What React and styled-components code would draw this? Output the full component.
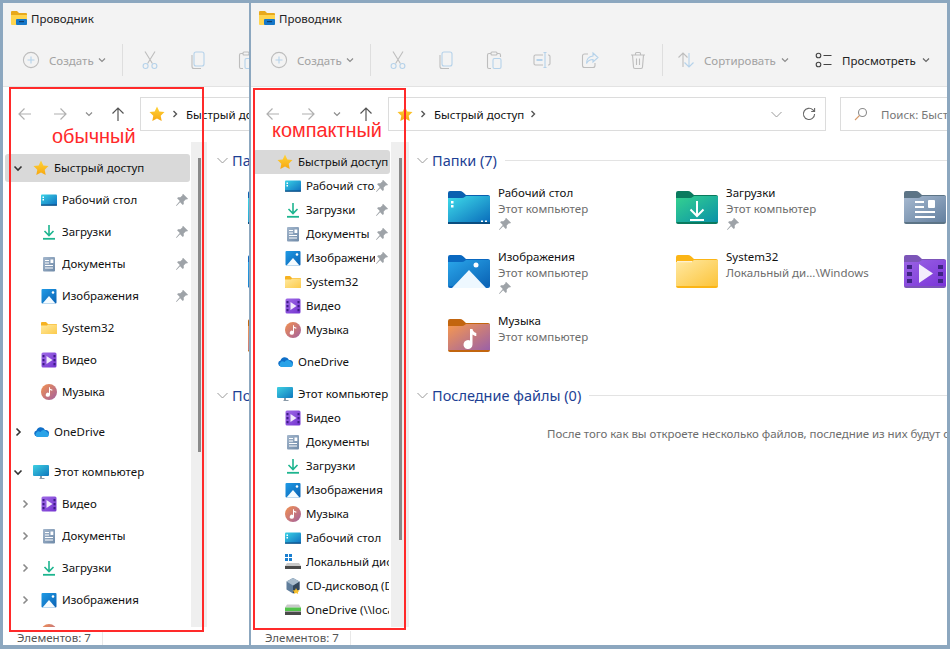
import React, { useId } from 'react'
import styled, { createGlobalStyle } from 'styled-components'

const GlobalStyle = createGlobalStyle`
  html, body { margin: 0; padding: 0; background: #8ca7bf; }
  body { font-family: "Noto Sans", "Open Sans", sans-serif; font-size: 11.5px; color: #111; }
`

const Page = styled.div`
  position: relative;
  display: flex;
  gap: 2px;
  width: 950px;
  height: 649px;
  box-sizing: border-box;
  padding: 3px 3px 4px;
  overflow: hidden;
  background: #8ca7bf;
`

const Window = styled.div`
  display: flex;
  flex-direction: column;
  flex: none;
  width: ${p => p.$width}px;
  overflow: hidden;
  background: #fff;
`

const TitleBar = styled.div`
  display: flex;
  align-items: center;
  gap: 4px;
  flex: none;
  height: 30px;
  padding-left: 8px;
  background: #f3f3f3;
  color: #222;
`

const Toolbar = styled.div`
  display: flex;
  align-items: center;
  flex: none;
  height: 54px;
  width: 696px;
  padding-top: 1px;
  box-sizing: border-box;
  background: #f3f3f3;
  border-bottom: 1px solid #e3e3e3;
  color: #a2a2a2;
`

const Labeled = styled.div`
  display: flex;
  align-items: center;
  flex: none;
  width: ${p => p.$width}px;
  padding-left: ${p => p.$pad}px;
  box-sizing: border-box;
  color: ${p => (p.$dark ? '#222' : '#a2a2a2')};
  white-space: nowrap;
  svg:first-child { margin-right: 8px; flex: none; }
`

const Caret = styled.svg`
  flex: none;
  width: 8px;
  height: 6px;
  margin-left: ${p => p.$gap}px;
  fill: none;
  stroke: #8c8c8c;
  stroke-width: 1.2;
`

const ToolButton = styled.div`
  display: flex;
  align-items: center;
  justify-content: center;
  flex: none;
  width: 48px;
`

const ToolSep = styled.div`
  flex: none;
  width: 1px;
  height: 32px;
  margin-right: ${p => p.$gap}px;
  background: #dedede;
`

const AddressRow = styled.div`
  display: flex;
  align-items: flex-start;
  flex: none;
  width: 696px;
  height: 55px;
  padding: 10px 0 0 4px;
  box-sizing: border-box;
`

const NavButton = styled.div`
  display: flex;
  align-items: center;
  justify-content: center;
  flex: none;
  width: ${p => p.$width}px;
  height: 34px;
`

const AddressBox = styled.div`
  display: flex;
  align-items: center;
  flex: none;
  width: 438px;
  height: 34px;
  margin-left: 5px;
  box-sizing: border-box;
  border: 1px solid #dcdcdc;
  padding-left: 8px;
  color: #111;
  white-space: nowrap;
`

const Crumb = styled.span`
  margin: 0 6px 0 8px;
`

const CrumbArrow = styled.svg`
  flex: none;
  width: 6px;
  height: 8px;
  margin-left: ${p => p.$gap || 0}px;
  fill: none;
  stroke: #555;
  stroke-width: 1.4;
`

const AddressEnd = styled.div`
  display: flex;
  align-items: center;
  gap: 20px;
  margin-left: auto;
  padding-right: 9px;
`

const SearchBox = styled.div`
  display: flex;
  align-items: center;
  flex: none;
  width: 200px;
  height: 34px;
  margin-left: 14px;
  box-sizing: border-box;
  border: 1px solid #dcdcdc;
  padding-left: 13px;
  gap: 13px;
  color: #777;
  white-space: nowrap;
  overflow: hidden;
`

const Main = styled.div`
  display: flex;
  flex: 1;
  min-height: 0;
`

const Nav = styled.div`
  display: flex;
  flex: none;
  width: ${p => p.$width}px;
  box-sizing: border-box;
  padding-right: ${p => p.$pad}px;
  overflow: hidden;
`

const NavList = styled.div`
  display: flex;
  flex-direction: column;
  flex: 1;
  min-width: 0;
  gap: ${p => (p.$compact ? 0 : 4)}px;
  padding-top: ${p => (p.$compact ? 8 : 12)}px;
`

const Row = styled.div`
  display: flex;
  align-items: center;
  flex: none;
  height: ${p => (p.$compact ? 24 : 28)}px;
  margin: ${p => (p.$spaced ? 8 : 0)}px 1px 0 2px;
  padding-left: ${p => p.$indent}px;
  padding-right: 1px;
  border-radius: 3px;
  background: ${p => (p.$selected ? '#d9d9d9' : 'transparent')};
`

const Expander = styled.div`
  display: flex;
  align-items: center;
  justify-content: center;
  flex: none;
  width: 16px;
  margin-right: ${p => p.$gap}px;
`

const RowIcon = styled.svg`
  flex: none;
  width: 16px;
  height: 16px;
  margin-right: 5px;
`

const RowLabel = styled.span`
  flex: 1;
  min-width: 0;
  overflow: hidden;
  white-space: nowrap;
  line-height: 15px;
  padding-bottom: 1px;
`

const Pin = styled.svg`
  flex: none;
  width: 14px;
  height: 14px;
  fill: #9ea3a8;
`

const Track = styled.div`
  display: flex;
  justify-content: center;
  flex: none;
  width: ${p => p.$width}px;
  padding-top: 16px;
  background: #efefef;
`

const Thumb = styled.div`
  width: 3px;
  height: ${p => p.$height}px;
  background: #8a8a8a;
`

const Content = styled.div`
  flex: none;
  width: 540px;
  padding-top: 8px;
`

const SectionHead = styled.div`
  display: flex;
  align-items: center;
  height: 20px;
  margin-top: ${p => p.$top || 0}px;
  padding-left: 7px;
  font-size: 14.5px;
  color: #1d3f94;
  white-space: nowrap;
  svg { margin-right: 4px; flex: none; }
  &::after {
    content: '';
    flex: 1;
    height: 1px;
    margin-left: 8px;
    background: #e3e3e3;
  }
`

const FolderGrid = styled.div`
  display: grid;
  grid-template-columns: repeat(3, 228px);
  grid-auto-rows: 64px;
  margin-top: 15px;
  padding-left: 38px;
`

const FolderItem = styled.div`
  display: flex;
  gap: 8px;
`

const FolderArt = styled.svg`
  flex: none;
  width: 42px;
  height: 33px;
  margin-top: 6px;
`

const FolderText = styled.div`
  display: flex;
  flex-direction: column;
  line-height: 16px;
  white-space: nowrap;
`

const FolderSub = styled.span`
  color: #6d6d6d;
`

const Message = styled.div`
  margin-top: 21px;
  padding-left: 137px;
  line-height: 16px;
  letter-spacing: -0.05px;
  color: #6d6d6d;
  white-space: nowrap;
  overflow: hidden;
`

const StatusBar = styled.div`
  display: flex;
  align-items: center;
  flex: none;
  height: 18px;
  padding: 3px 0 0 14px;
  box-sizing: border-box;
  color: #555;
  white-space: nowrap;
`

const StatusSep = styled.div`
  width: 1px;
  height: 14px;
  margin-left: 11px;
  background: #e8e8e8;
`

const RedFrame = styled.div`
  position: absolute;
  left: ${p => p.$x}px;
  top: ${p => p.$y}px;
  width: ${p => p.$w}px;
  height: ${p => p.$h}px;
  box-sizing: border-box;
  border: 2px solid #ff2a2a;
`

const RedLabel = styled.div`
  position: absolute;
  left: ${p => p.$x}px;
  top: ${p => p.$y}px;
  font-family: "Liberation Sans", Arial, sans-serif;
  font-size: 19.9px;
  line-height: 22px;
  color: #ff2a2a;
`

/* ---- small drawings ---- */

const CaretDown = ({ gap = 4, dark }) => (
  <Caret $gap={gap} viewBox="0 0 8 6"><path d="M1 1.5l3 3 3-3" stroke={dark ? '#666' : undefined} /></Caret>
)

const Chevron = ({ open, dark }) => (
  <svg width="10" height="10" viewBox="0 0 10 10" fill="none" stroke={dark ? '#333' : '#8a8a8a'} strokeWidth="1.6">
    <path d={open ? 'M1.5 3.5L5 7l3.5-3.5' : 'M3.5 1.5L7 5 3.5 8.5'} />
  </svg>
)

const HeadChevron = () => (
  <svg width="11" height="7" viewBox="0 0 11 7" fill="none" stroke="#9a9a9a" strokeWidth="1">
    <path d="M.5 1l5 5 5-5" />
  </svg>
)

const T = ({ children }) => (
  <svg width="20" height="20" viewBox="0 0 20 20" fill="none" strokeWidth="1.1">{children}</svg>
)

const GRAY = '#bdbdbd'
const BLUE = '#b5d2ea'

const PlusIcon = () => (
  <T><circle cx="10" cy="10" r="7.6" stroke={GRAY} /><path d="M10 6.5v7M6.5 10h7" stroke={BLUE} /></T>
)
const CutIcon = () => (
  <T><path d="M5 1.5l7.4 12M15 1.5L7.6 13.5" stroke={GRAY} /><circle cx="5.6" cy="16" r="2.5" stroke={BLUE} /><circle cx="14.4" cy="16" r="2.5" stroke={BLUE} /></T>
)
const CopyIcon = () => (
  <T><rect x="6" y="2" width="10" height="14" rx="2" stroke={BLUE} /><path d="M4 5v11.5A2 2 0 0 0 6 18.5h7" stroke={GRAY} /></T>
)
const PasteIcon = () => (
  <T><path d="M7 3.5H5A1.5 1.5 0 0 0 3.5 5v12A1.5 1.5 0 0 0 5 18.5h2M13 3.5h2A1.5 1.5 0 0 1 16.5 5v2" stroke={GRAY} /><rect x="7" y="2" width="6" height="3" rx="1" stroke={GRAY} /><rect x="9" y="8.5" width="8" height="10" rx="1.5" stroke={BLUE} /></T>
)
const RenameIcon = () => (
  <T><path d="M11 5H3.5A1.5 1.5 0 0 0 2 6.5v7A1.5 1.5 0 0 0 3.5 15H11" stroke={GRAY} /><path d="M16 5h.5A1.5 1.5 0 0 1 18 6.5v7a1.5 1.5 0 0 1-1.5 1.5H16" stroke={GRAY} /><path d="M11.5 2.5h3M11.5 17.5h3M13 2.5v15" stroke={BLUE} /><path d="M4.5 10h6" stroke={BLUE} strokeWidth="2" /></T>
)
const ShareIcon = () => (
  <T><path d="M8 4H4.5A2 2 0 0 0 2.5 6v9.5a2 2 0 0 0 2 2H13a2 2 0 0 0 2-2V13" stroke={GRAY} /><path d="M13 3l5 4.5L13 12V9.5c-3 0-5 1-6.5 4 0-4 2.5-7 6.5-7.5z" stroke={BLUE} /></T>
)
const TrashIcon = () => (
  <T><path d="M3 5h14M7.5 5V3.5a1 1 0 0 1 1-1h3a1 1 0 0 1 1 1V5M4.5 5l1 12a1.5 1.5 0 0 0 1.5 1.5h6a1.5 1.5 0 0 0 1.5-1.5l1-12M8.5 8.5v6.5M11.5 8.5v6.5" stroke={GRAY} /></T>
)
const SortIcon = () => (
  <T><path d="M7 17V3M2.5 7.5L7 3l4.5 4.5" stroke={GRAY} /><path d="M13 3v14M8.5 12.5L13 17l4.5-4.5" stroke={BLUE} /></T>
)
const ViewIcon = () => (
  <T><circle cx="4.5" cy="5.5" r="2.3" stroke="#444" /><circle cx="4.5" cy="14.5" r="2.3" stroke="#444" /><path d="M9.5 5.5h8M9.5 14.5h8" stroke="#444" /></T>
)
const Arrow = ({ d, color }) => (
  <svg width="16" height="16" viewBox="0 0 16 16" fill="none" stroke={color} strokeWidth="1.2"><path d={d} /></svg>
)
const BACK = 'M14 8H2M7.5 2.5L2 8l5.5 5.5'
const FORWARD = 'M2 8h12M8.5 2.5L14 8l-5.5 5.5'
const UP = 'M8 15V2M2.5 7.5L8 2l5.5 5.5'

const RefreshIcon = () => (
  <svg width="14" height="14" viewBox="0 0 14 14" fill="none" stroke="#666" strokeWidth="1.1">
    <path d="M12.6 7a5.6 5.6 0 1 1-1.7-4.100L12.6 4.5M12.6 1v3.5H9.2" />
  </svg>
)
const SearchIcon = () => (
  <svg width="14" height="14" viewBox="0 0 14 14" fill="none" strokeWidth="1.1" style={{ flex: 'none' }}>
    <circle cx="8.5" cy="5.5" r="4" stroke="#8c8c8c" /><path d="M5.5 8.5L1 13" stroke="#d69a6a" />
  </svg>
)

const PinIcon = () => (
  <Pin viewBox="0 0 14 14"><path d="M8.2 1l4.800 4.800-1 .8-1-.3-2.300 2.300.1 2.300-1 1-2.700-2.700L1.5 13 1 12.5l3.800-4.600L2.1 5.2l1-1 2.300.1 2.300-2.300-.3-1z" /></Pin>
)

const Grad = ({ id, from, to, x2 = 1, y2 = 1 }) => (
  <linearGradient id={id} x1="0" y1="0" x2={x2} y2={y2}>
    <stop offset="0" stopColor={from} /><stop offset="1" stopColor={to} />
  </linearGradient>
)

const StarIcon = ({ size = 16 }) => {
  const id = useId()
  return (
    <svg width={size} height={size} viewBox="0 0 16 16" style={{ flex: 'none', display: 'block' }}>
      <Grad id={id} from="#ffd43a" to="#f7a70f" x2={0} />
      <path fill={`url(#${id})`} d="M8 .6l2.300 4.800 5.200.7-3.800 3.600 1 5.200L8 12.400l-4.700 2.500 1-5.200L.5 6.100l5.200-.7z" />
    </svg>
  )
}

const DesktopGlyph = () => {
  const id = useId()
  return (
    <RowIcon viewBox="0 0 16 16">
      <Grad id={id} from="#39d2e6" to="#0f6fc0" />
      <rect x="0" y="2.5" width="16" height="11" rx="1" fill={`url(#${id})`} />
      <rect x="0" y="12.5" width="16" height="1.2" fill="#0c4a80" />
      <path fill="#fff" d="M1.5 4.5h1.5V6H1.5zM1.5 7h1.5v1.5H1.5z" />
    </RowIcon>
  )
}
const DownloadGlyph = () => (
  <RowIcon viewBox="0 0 16 16" fill="none" stroke="#1db58f" strokeWidth="1.6">
    <path d="M8 1v10M3.5 7L8 11.5 12.5 7" /><path d="M2 14.8h12" strokeWidth="1.8" />
  </RowIcon>
)
const DocGlyph = () => {
  const id = useId()
  return (
    <RowIcon viewBox="0 0 16 16">
      <Grad id={id} from="#a4b7cd" to="#6f8aa8" />
      <rect x="2" y="1" width="12" height="14.5" rx="1" fill={`url(#${id})`} />
      <path stroke="#fff" d="M4 4.5h4M4 7h4M4 9.5h8M4 12h8" />
      <rect x="9.5" y="3.5" width="2.8" height="3.5" fill="#fff" />
    </RowIcon>
  )
}
const PictureGlyph = () => {
  const id = useId()
  return (
    <RowIcon viewBox="0 0 16 16">
      <Grad id={id} from="#1f9be6" to="#0a62b4" />
      <rect x="0.5" y="1" width="15" height="14.5" rx="1" fill={`url(#${id})`} />
      <path fill="#f4fbff" d="M1.5 15.5L8 8l6.500 7.500z" />
      <circle cx="12" cy="4.5" r="1.3" fill="#fff" />
    </RowIcon>
  )
}
const FolderGlyph = () => {
  const id = useId()
  return (
    <RowIcon viewBox="0 0 16 16">
      <Grad id={id} from="#ffe9a0" to="#fccb4c" />
      <path fill="#f6b221" d="M0 3a1 1 0 0 1 1-1h4l2 2h8a1 1 0 0 1 1 1v8a1 1 0 0 1-1 1H1a1 1 0 0 1-1-1z" />
      <path fill={`url(#${id})`} d="M0 5.5h6l1-1h8a1 1 0 0 1 1 1V13a1 1 0 0 1-1 1H1a1 1 0 0 1-1-1z" />
    </RowIcon>
  )
}
const VideoGlyph = () => {
  const id = useId()
  return (
    <RowIcon viewBox="0 0 16 16">
      <Grad id={id} from="#9f6be6" to="#7434d0" />
      <rect x="0.5" y="0.5" width="15" height="15" rx="1.5" fill={`url(#${id})`} />
      <path fill="#3d1b86" d="M1.5 3h2v2.200h-2zM1.5 7h2v2.200h-2zM1.5 11h2v2.200h-2zM12.5 3h2v2.200h-2zM12.5 7h2v2.200h-2zM12.5 11h2v2.200h-2z" />
      <path fill="#f1eafc" d="M5.5 4l6 4-6 4z" />
    </RowIcon>
  )
}
const MusicGlyph = () => {
  const id = useId()
  return (
    <RowIcon viewBox="0 0 16 16">
      <Grad id={id} from="#f4924f" to="#a2609f" />
      <circle cx="8" cy="8" r="8" fill={`url(#${id})`} />
      <path fill="#fff" d="M8 3.2h1v1.600c.7.5 1.700.7 2.300.7v1.200c-.8 0-1.600-.2-2.300-.6v4.600a2.100 2.100 0 1 1-1-1.800z" />
    </RowIcon>
  )
}
const CloudGlyph = () => (
  <RowIcon viewBox="0 0 16 16">
    <path fill="#0f6fc8" d="M4 12.5a3 3 0 0 1-.5-5.900A4.5 4.5 0 0 1 12 6a3.2 3.2 0 0 1 3.800 4.200l-.8 2.300z" />
    <path fill="#29a3e8" d="M4 13h9.5a2.4 2.4 0 0 0 .6-4.700A3.6 3.6 0 0 0 7.5 8 2.8 2.8 0 0 0 4 13z" />
  </RowIcon>
)
const MonitorGlyph = () => {
  const id = useId()
  return (
    <RowIcon viewBox="0 0 16 16">
      <Grad id={id} from="#3fd0e2" to="#0f78be" />
      <rect x="0" y="1" width="16" height="11" rx="1" fill={`url(#${id})`} />
      <path fill="#8a9aa8" d="M7 12h2v2h2.500v1h-5v-1H7z" />
    </RowIcon>
  )
}
const DiskGlyph = () => (
  <RowIcon viewBox="0 0 16 16">
    <path fill="#1a7fd0" d="M0 0h3v3H0zM4 0h3v3H4zM0 4h3v3H0zM4 4h3v3H4z" />
    <path fill="#c9c9c9" d="M2 9h12l2 3H0z" />
    <rect x="0" y="12" width="16" height="3" fill="#4a4a4a" />
  </RowIcon>
)
const BoxGlyph = () => (
  <RowIcon viewBox="0 0 16 16">
    <path fill="#5f7d9b" d="M8 0l6.500 3.500v8L8 15.500 1.500 11.500v-8z" />
    <path fill="#32475c" d="M8 7.500l6.500-4v8L8 15.500z" />
    <path fill="#a8bccd" d="M8 0l6.500 3.500L8 7.500 1.500 3.500z" />
    <path fill="#f8c02a" d="M11 10l1.200 2.300 2.300.3-1.700 1.600.4 1.800-2.200-1-2 1 .4-1.800-1.700-1.600 2.300-.3z" />
  </RowIcon>
)
const NetDiskGlyph = () => (
  <RowIcon viewBox="0 0 16 16">
    <path fill="#c9c9c9" d="M2 2.5h12l2 3H0z" />
    <rect x="0" y="5.5" width="16" height="3.5" fill="#52c24a" />
    <rect x="0" y="9.5" width="16" height="3.5" fill="#4a4a4a" />
  </RowIcon>
)

const BigFolder = ({ from, to, tab, children }) => {
  const id = useId()
  return (
    <FolderArt viewBox="0 0 42 33">
      <Grad id={id} from={from} to={to} />
      <path fill={tab} d="M0 2a2 2 0 0 1 2-2h10c1 0 2 .4 3 1.300L18 4h22a2 2 0 0 1 2 2v25a2 2 0 0 1-2 2H2a2 2 0 0 1-2-2z" />
      <path fill={`url(#${id})`} d="M0 7h14c1 0 2-.4 3-1.200L18 5h23a1 1 0 0 1 1 1v25H0z" />
      {children}
    </FolderArt>
  )
}

const ART = {
  desktop: (
    <BigFolder from="#3fdcea" to="#0a6dbb" tab="#0a5fb0">
      <path fill="#fff" d="M3 10h2.500v2.500H3zM3 14h2.500v2.500H3zM33 29.500h2v1.500h-2zM37 29.500h2v1.500h-2z" />
      <rect y="31" width="42" height="2" fill="#0a4d80" />
    </BigFolder>
  ),
  download: (
    <BigFolder from="#35d28f" to="#0a91a8" tab="#0a7a5e">
      <path fill="none" stroke="#fff" strokeWidth="2" d="M21 10v15M14.500 18.500L21 25l6.500-6.500M14 29h14" />
    </BigFolder>
  ),
  docs: (
    <BigFolder from="#a6b9d0" to="#64809f" tab="#5c7486">
      <path stroke="#fff" strokeWidth="1.8" d="M11 11h9M11 16h9M11 21h20M11 26h20" />
      <rect x="24" y="9" width="7" height="8" rx="1" fill="#fff" />
    </BigFolder>
  ),
  pictures: (
    <BigFolder from="#2aa6ea" to="#0a62b4" tab="#0a68c0">
      <path fill="#eef8ff" d="M4 33L21 15l17 18z" />
      <circle cx="28" cy="10" r="2.5" fill="#fff" />
    </BigFolder>
  ),
  yellow: (
    <BigFolder from="#ffe9a3" to="#fcc43a" tab="#fbb516">
      <rect x="1" y="6" width="15" height="1.2" fill="#fff" opacity="0.8" />
    </BigFolder>
  ),
  video: (
    <BigFolder from="#9a63e4" to="#7a34d8" tab="#7c55b8">
      <path fill="#3f2385" d="M3 10h5v4H3zM3 17h5v4H3zM3 24h5v4H3zM34 10h5v4h-5zM34 17h5v4h-5zM34 24h5v4h-5z" />
      <path fill="#f4eefc" d="M15 9l14 9.500L15 28z" />
    </BigFolder>
  ),
  music: (
    <BigFolder from="#f7994e" to="#9a60a8" tab="#c2650f">
      <path fill="#fff" d="M22 10h2.500c.3 2 1.600 3.500 3.800 4v3c-1.500 0-2.800-.6-3.800-1.500V25.500a4.500 4.500 0 1 1-2.500-4z" />
    </BigFolder>
  ),
}

const folders = [
  { name: 'Рабочий стол', sub: 'Этот компьютер', art: 'desktop', pinned: true },
  { name: 'Загрузки', sub: 'Этот компьютер', art: 'download', pinned: true },
  { name: 'Документы', sub: 'Этот компьютер', art: 'docs', pinned: true },
  { name: 'Изображения', sub: 'Этот компьютер', art: 'pictures', pinned: true },
  { name: 'System32', sub: 'Локальный ди...\\Windows', art: 'yellow' },
  { name: 'Видео', sub: 'Этот компьютер', art: 'video' },
  { name: 'Музыка', sub: 'Этот компьютер', art: 'music' },
]

const quick = [
  { label: 'Рабочий стол', Icon: DesktopGlyph, pin: true },
  { label: 'Загрузки', Icon: DownloadGlyph, pin: true },
  { label: 'Документы', Icon: DocGlyph, pin: true },
  { label: 'Изображения', Icon: PictureGlyph, pin: true },
  { label: 'System32', Icon: FolderGlyph },
  { label: 'Видео', Icon: VideoGlyph },
  { label: 'Музыка', Icon: MusicGlyph },
]

const computer = [
  { label: 'Видео', Icon: VideoGlyph },
  { label: 'Документы', Icon: DocGlyph },
  { label: 'Загрузки', Icon: DownloadGlyph },
  { label: 'Изображения', Icon: PictureGlyph },
  { label: 'Музыка', Icon: MusicGlyph },
  { label: 'Рабочий стол', Icon: DesktopGlyph },
  { label: 'Локальный диск (C:)', Icon: DiskGlyph },
  { label: 'CD-дисковод (D:) VirtualBox', Icon: BoxGlyph },
  { label: 'OneDrive (\\\\localhost)', Icon: NetDiskGlyph },
]

const StarGlyph = () => (
  <RowIcon as="span"><StarIcon /></RowIcon>
)

const NavRow = ({ compact, level = 0, chevron, label, Icon, pin, selected, spaced }) => {
  let indent
  if (compact) indent = level ? 32 : 24
  else indent = level ? 12 : 5
  return (
    <Row $compact={compact} $indent={indent} $selected={selected} $spaced={spaced}>
      {!compact && (
        <Expander $gap={level ? 8 : 7}>
          {chevron && <Chevron open={chevron === 'open'} dark={level === 0} />}
        </Expander>
      )}
      <Icon />
      <RowLabel>{label}</RowLabel>
      {pin && <PinIcon />}
    </Row>
  )
}

// the regular window only has room for the first rows of the computer branch
const NavPane = ({ compact }) => (
  <Nav $width={compact ? 159 : 207} $pad={compact ? 1 : 3}>
    <NavList $compact={compact}>
      <NavRow compact={compact} chevron="open" label="Быстрый доступ" Icon={StarGlyph} selected />
      {quick.map(r => <NavRow key={r.label} compact={compact} level={1} {...r} />)}
      <NavRow compact={compact} chevron="closed" label="OneDrive" Icon={CloudGlyph} spaced />
      <NavRow compact={compact} chevron="open" label="Этот компьютер" Icon={MonitorGlyph} spaced />
      {computer.slice(0, compact ? 9 : 5).map(r => (
        <NavRow key={r.label} compact={compact} level={1} chevron="closed" {...r} />
      ))}
    </NavList>
    <Track $width={compact ? 18 : 16}>
      <Thumb $height={compact ? 382 : 294} />
    </Track>
  </Nav>
)

const FolderCard = ({ name, sub, art, pinned, bare }) => (
  <FolderItem>
    {ART[art]}
    {!bare && (
      <FolderText>
        <span>{name}</span>
        <FolderSub>{sub}</FolderSub>
        {pinned && <PinIcon />}
      </FolderText>
    )}
  </FolderItem>
)

const Explorer = ({ compact, width }) => (
  <Window $width={width}>
    <TitleBar>
      <svg width="16" height="14" viewBox="0 0 16 14">
        <path fill="#e8a91c" d="M0 1a1 1 0 0 1 1-1h5l2 2h7a1 1 0 0 1 1 1v2H0z" />
        <path fill="#ffd54f" d="M0 4h16v9a1 1 0 0 1-1 1H1a1 1 0 0 1-1-1z" />
        <rect x="5" y="8" width="11" height="6" rx="1" fill="#1577c9" />
        <rect x="8" y="10" width="5" height="1.2" fill="#0b3f70" />
      </svg>
      Проводник
    </TitleBar>
    <Toolbar>
      <Labeled $width={119} $pad={18}><PlusIcon />Создать<CaretDown /></Labeled>
      <ToolSep $gap={3} />
      <ToolButton><CutIcon /></ToolButton>
      <ToolButton><CopyIcon /></ToolButton>
      <ToolButton><PasteIcon /></ToolButton>
      {compact && (
        <>
          <ToolButton><RenameIcon /></ToolButton>
          <ToolButton><ShareIcon /></ToolButton>
          <ToolButton><TrashIcon /></ToolButton>
          <ToolSep $gap={13} />
          <Labeled $width={138} $pad={0}><SortIcon />Сортировать<CaretDown gap={5} /></Labeled>
          <Labeled $width={120} $pad={0} $dark><ViewIcon />Просмотреть<CaretDown gap={6} dark /></Labeled>
        </>
      )}
    </Toolbar>
    <AddressRow>
      <NavButton $width={35}><Arrow d={BACK} color="#b0b0b0" /></NavButton>
      <NavButton $width={35}><Arrow d={FORWARD} color="#b0b0b0" /></NavButton>
      <NavButton $width={24}><CaretDown gap={0} /></NavButton>
      <NavButton $width={34}><Arrow d={UP} color="#555" /></NavButton>
      <AddressBox>
        <StarIcon />
        <CrumbArrow $gap={7} viewBox="0 0 6 8"><path d="M1.5 1l3 3-3 3" /></CrumbArrow>
        <Crumb>Быстрый доступ</Crumb>
        <CrumbArrow viewBox="0 0 6 8"><path d="M1.5 1l3 3-3 3" /></CrumbArrow>
        {compact && (
          <AddressEnd>
            <HeadChevron />
            <RefreshIcon />
          </AddressEnd>
        )}
      </AddressBox>
      {compact && <SearchBox><SearchIcon />Поиск: Быстрый доступ</SearchBox>}
    </AddressRow>
    <Main>
      <NavPane compact={compact} />
      <Content>
        <SectionHead><HeadChevron />Папки (7)</SectionHead>
        <FolderGrid>
          {folders.map(f => <FolderCard key={f.name} bare={!compact} {...f} />)}
        </FolderGrid>
        <SectionHead $top={8}><HeadChevron />Последние файлы (0)</SectionHead>
        {compact && (
          <Message>После того как вы откроете несколько файлов, последние из них будут отображаться здесь.</Message>
        )}
      </Content>
    </Main>
    <StatusBar>Элементов: 7<StatusSep /></StatusBar>
  </Window>
)

export default function App() {
  return (
    <Page>
      <GlobalStyle />
      <Explorer width={246} />
      <Explorer compact width={696} />
      <RedFrame $x={9} $y={87} $w={195} $h={545} />
      <RedFrame $x={253} $y={88} $w={153} $h={542} />
      <RedLabel $x={52} $y={125}>обычный</RedLabel>
      <RedLabel $x={272} $y={119}>компактный</RedLabel>
    </Page>
  )
}
